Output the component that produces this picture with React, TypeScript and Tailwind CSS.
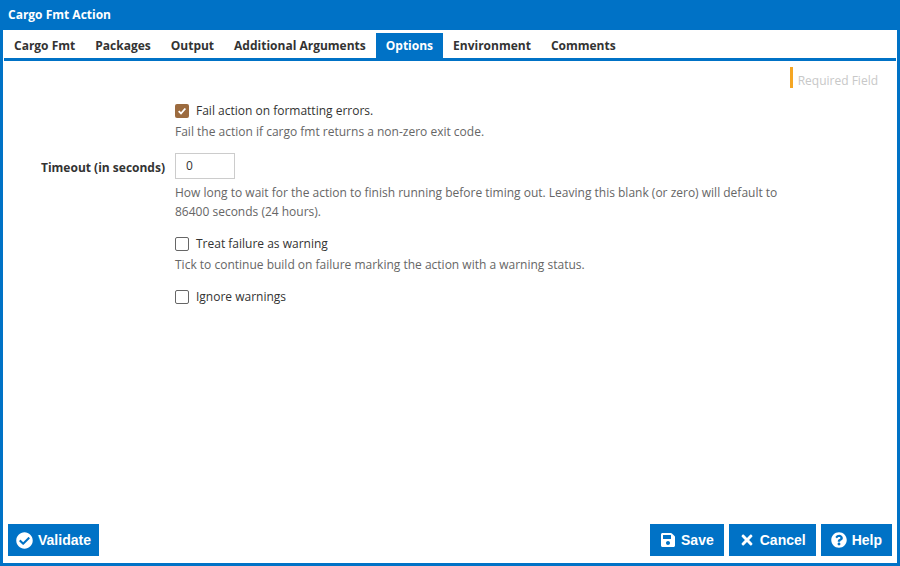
import { FaCheckCircle, FaSave, FaTimes, FaQuestionCircle } from "react-icons/fa";

const tabs = ["Cargo Fmt", "Packages", "Output", "Additional Arguments", "Options", "Environment", "Comments"];

const Check = ({ checked }: { checked?: boolean }) =>
    checked ? (
        <span className="flex h-[14px] w-[14px] items-center justify-center rounded-[2px] bg-[#9c6b3f]">
            <svg viewBox="0 0 12 12" className="h-[10px] w-[10px]">
                <path d="M2 6.2 L4.8 9 L10 3" fill="none" stroke="#fff" strokeWidth="2.2" />
            </svg>
        </span>
    ) : (
        <span className="h-[14px] w-[14px] rounded-[2px] border border-[#666] bg-white" />
    );

export default function App() {
    return (
        <div
            className="flex h-[566px] w-[900px] flex-col border-x-[3px] border-b-[3px] border-[#0072c6] bg-white text-[12px] text-[#333]"
            style={{ fontFamily: '"Open Sans", "Noto Sans", sans-serif' }}
        >
            {/* Title bar */}
            <div className="-mx-[3px] flex h-[30px] items-center bg-[#0072c6] px-[8px] font-bold text-white">
                Cargo Fmt Action
            </div>

            {/* Tabs */}
            <div className="mx-[1px] mt-[3px] flex h-[25px] border-b-[3px] border-[#0072c6] box-content pr-[4px]">
                {tabs.map((t) => (
                    <div
                        key={t}
                        className={`flex items-center px-[10px] font-bold ${t === "Options" ? "bg-[#0072c6] text-white" : "text-[#333]"}`}
                    >
                        {t}
                    </div>
                ))}
            </div>

            <div className="flex flex-1 flex-col">
                <div className="flex justify-end pr-[19px] pt-[6px]">
                    <div className="border-l-[3px] border-[#f5a623] pl-[5px] pt-[7px] leading-[14px] text-[#c8c8c8]">
                        Required Field
                    </div>
                </div>

                <div className="mt-[14px] flex flex-col pl-[172px]">
                    <div className="flex items-center gap-[7px]">
                        <Check checked />
                        <span>Fail action on formatting errors.</span>
                    </div>
                    <div className="mt-[3px] text-[#666]">Fail the action if cargo fmt returns a non-zero exit code.</div>
                </div>

                <div className="mt-[12px] flex">
                    <div className="w-[162px] pt-[6px] text-right font-bold">Timeout (in seconds)</div>
                    <div className="ml-[10px] flex flex-col">
                        <div className="flex h-[26px] w-[60px] items-center border border-[#ccc] px-[10px]">0</div>
                        <div className="mt-[4px] w-[620px] leading-[19px] text-[#666]">
                            How long to wait for the action to finish running before timing out. Leaving this blank (or zero) will default to 86400 seconds (24 hours).
                        </div>
                    </div>
                </div>

                <div className="mt-[14px] flex flex-col pl-[172px]">
                    <div className="flex items-center gap-[7px]">
                        <Check />
                        <span>Treat failure as warning</span>
                    </div>
                    <div className="mt-[3px] text-[#666]">Tick to continue build on failure marking the action with a warning status.</div>
                </div>

                <div className="mt-[14px] flex flex-col pl-[172px]">
                    <div className="flex items-center gap-[7px]">
                        <Check />
                        <span>Ignore warnings</span>
                    </div>
                </div>
            </div>

            {/* Footer */}
            <div
                className="flex items-center justify-between px-[5px] pb-[7px] text-[14px] font-bold text-white"
                style={{ fontFamily: '"Liberation Sans", Arial, sans-serif' }}
            >
                <button className="flex h-[32px] items-center gap-[5px] bg-[#0072c6] px-[8px]">
                    <FaCheckCircle className="h-[17px] w-[17px]" />
                    Validate
                </button>
                <div className="flex gap-[5px]">
                    <button className="flex h-[32px] items-center gap-[5px] bg-[#0072c6] px-[10px]">
                        <FaSave className="h-[16px] w-[16px]" />
                        Save
                    </button>
                    <button className="flex h-[32px] items-center gap-[5px] bg-[#0072c6] px-[10px]">
                        <FaTimes className="h-[16px] w-[16px]" />
                        Cancel
                    </button>
                    <button className="flex h-[32px] items-center gap-[5px] bg-[#0072c6] px-[10px]">
                        <FaQuestionCircle className="h-[16px] w-[16px]" />
                        Help
                    </button>
                </div>
            </div>
        </div>
    );
}
